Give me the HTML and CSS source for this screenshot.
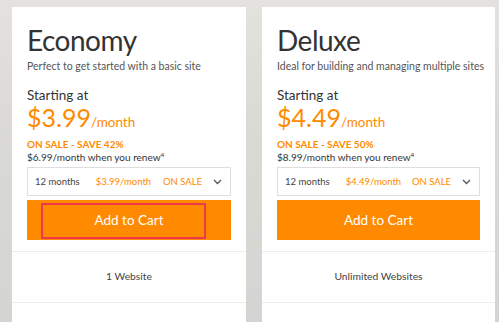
FILE: index.html
```html
<!DOCTYPE html>
<html lang="en">
<head>
  <meta charset="UTF-8">
  <meta name="viewport" content="width=device-width, initial-scale=1.0">
  <title>Hosting Plans</title>
  <link rel="stylesheet" href="styles.css">
</head>
<body>
  <div class="plans">
    <div class="plan">
      <div class="plan-top">
        <h2>Economy</h2>
        <p class="tagline">Perfect to get started with a basic site</p>
        <p class="starting">Starting at</p>
        <p class="price">$3.99<span class="per">/month</span></p>
        <p class="sale">ON SALE - SAVE 42%</p>
        <p class="renew">$6.99/month when you renew<sup>4</sup></p>
        <div class="term">
          <span class="months">12 months</span>
          <span class="term-price">$3.99/month</span>
          <span class="term-sale">ON SALE</span>
          <svg class="chev" width="9" height="6" viewBox="0 0 9 6"><path d="M1 1l3.5 3.5L8 1" fill="none" stroke="#555" stroke-width="1.3"/></svg>
        </div>
        <button class="cart focused">Add to Cart</button>
      </div>
      <div class="feature">1 Website</div>
      <div class="feature"></div>
    </div>
    <div class="plan">
      <div class="plan-top">
        <h2>Deluxe</h2>
        <p class="tagline">Ideal for building and managing multiple sites</p>
        <p class="starting">Starting at</p>
        <p class="price">$4.49<span class="per">/month</span></p>
        <p class="sale">ON SALE - SAVE 50%</p>
        <p class="renew">$8.99/month when you renew<sup>4</sup></p>
        <div class="term">
          <span class="months">12 months</span>
          <span class="term-price">$4.49/month</span>
          <span class="term-sale">ON SALE</span>
          <svg class="chev" width="9" height="6" viewBox="0 0 9 6"><path d="M1 1l3.5 3.5L8 1" fill="none" stroke="#555" stroke-width="1.3"/></svg>
        </div>
        <button class="cart">Add to Cart</button>
      </div>
      <div class="feature">Unlimited Websites</div>
      <div class="feature"></div>
    </div>
  </div>
</body>
</html>
```
FILE: styles.css
```css
:root {
  --orange: #ff8a00;
  --text: #333;
  --line: #ececec;
}
body {
  margin: 0;
  height: 322px;
  overflow: hidden;
  font-family: Lato, 'Noto Sans', Arial, sans-serif;
  color: var(--text);
  background: linear-gradient(180deg, #e3e2de 0%, #dad9d5 40%, #d4d4d2 100%);
}
.plans {
  display: flex;
  gap: 16px;
  padding: 7px 0 0 12px;
}
.plan {
  width: 234px;
  height: 330px;
  background: #fff;
}
.plan + .plan {
  width: 233px;
}
.plan-top {
  padding: 18px 15px 11px 15px;
}
h2 {
  margin: 0;
  font-size: 28px;
  font-weight: 400;
  line-height: 30px;
  letter-spacing: -0.5px;
  color: #333;
}
p {
  margin: 0;
}
.tagline {
  font-size: 10.5px;
  line-height: 14px;
  margin-top: 4px;
  color: #555;
  white-space: nowrap;
}
.starting {
  font-size: 13.5px;
  line-height: 16px;
  margin-top: 14px;
}
.price {
  font-size: 25px;
  line-height: 26px;
  color: var(--orange);
  margin-top: 1px;
}
.per {
  font-size: 13.5px;
}
.sale {
  font-size: 10px;
  font-weight: 700;
  line-height: 12px;
  color: var(--orange);
  margin-top: 3px;
}
.renew {
  font-size: 10px;
  line-height: 13px;
  margin-top: 1px;
  color: #333;
}
.renew sup {
  font-size: 6.5px;
  line-height: 0;
}
.term {
  display: flex;
  align-items: center;
  box-sizing: border-box;
  height: 29px;
  margin-top: 3px;
  padding: 0 8px 0 7px;
  border: 1px solid #dedede;
  font-size: 9.5px;
}
.months {
  color: #444;
  margin-right: 16px;
}
.term-price,
.term-sale {
  color: var(--orange);
}
.term-sale {
  margin-left: auto;
  margin-right: 11px;
}
.cart {
  position: relative;
  display: block;
  width: 100%;
  height: 40px;
  margin-top: 4px;
  padding: 0;
  border: none;
  background: var(--orange);
  color: #fff;
  font-family: inherit;
  font-size: 13.5px;
  line-height: 40px;
}
.cart.focused::after {
  content: '';
  position: absolute;
  top: 3px;
  left: 14px;
  right: 25px;
  bottom: 1px;
  border: 2px solid #ee3a48;
}
.feature {
  height: 50px;
  border-top: 1px solid var(--line);
  font-size: 10.3px;
  line-height: 49px;
  text-align: center;
  color: #444;
}
```
